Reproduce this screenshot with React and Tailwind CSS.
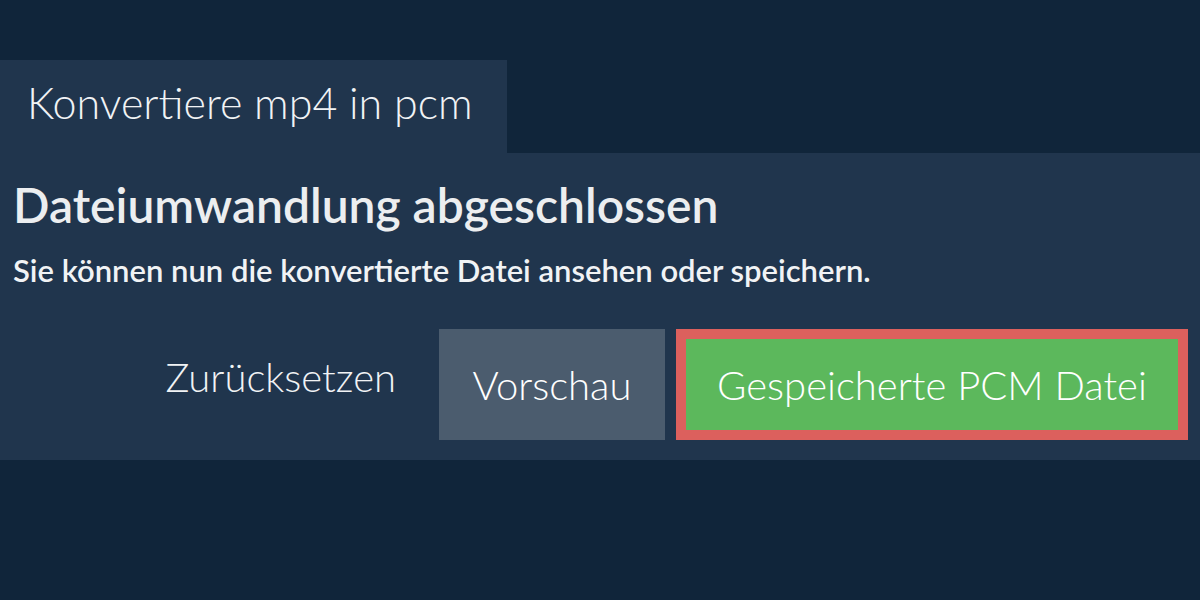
export default function App() {
  return (
    <div className="w-[1200px] h-[600px] bg-[#10253a] pt-[60px] font-['Lato',sans-serif] text-[#f1f3f5]">
      <div className="w-[507px] h-[93px] bg-[#20354d] flex items-center pl-[27px]">
        <h2 className="text-[43px] font-light leading-none -mt-[8px]">Konvertiere mp4 in pcm</h2>
      </div>
      <div className="bg-[#20354d] h-[307px] pl-[13px] pr-[12px] pt-[22px]">
        <h1 className="text-[48px] font-semibold leading-[60px] text-[#eceef0]">Dateiumwandlung abgeschlossen</h1>
        <p className="text-[31px] font-semibold leading-[40px] mt-[15px]">Sie können nun die konvertierte Datei ansehen oder speichern.</p>
        <div className="flex justify-end items-center gap-[11px] mt-[39px]">
          <button className="h-[111px] px-[32px] pb-[16px] text-[40px] font-light text-[#f1f3f5]">Zurücksetzen</button>
          <button className="h-[111px] w-[226px] bg-[#4b5c6e] text-[40px] font-light text-white">Vorschau</button>
          <button className="h-[111px] w-[512px] bg-[#5cb85c] border-[10px] border-[#dc605d] text-[40px] font-light text-white">Gespeicherte PCM Datei</button>
        </div>
      </div>
    </div>
  );
}
